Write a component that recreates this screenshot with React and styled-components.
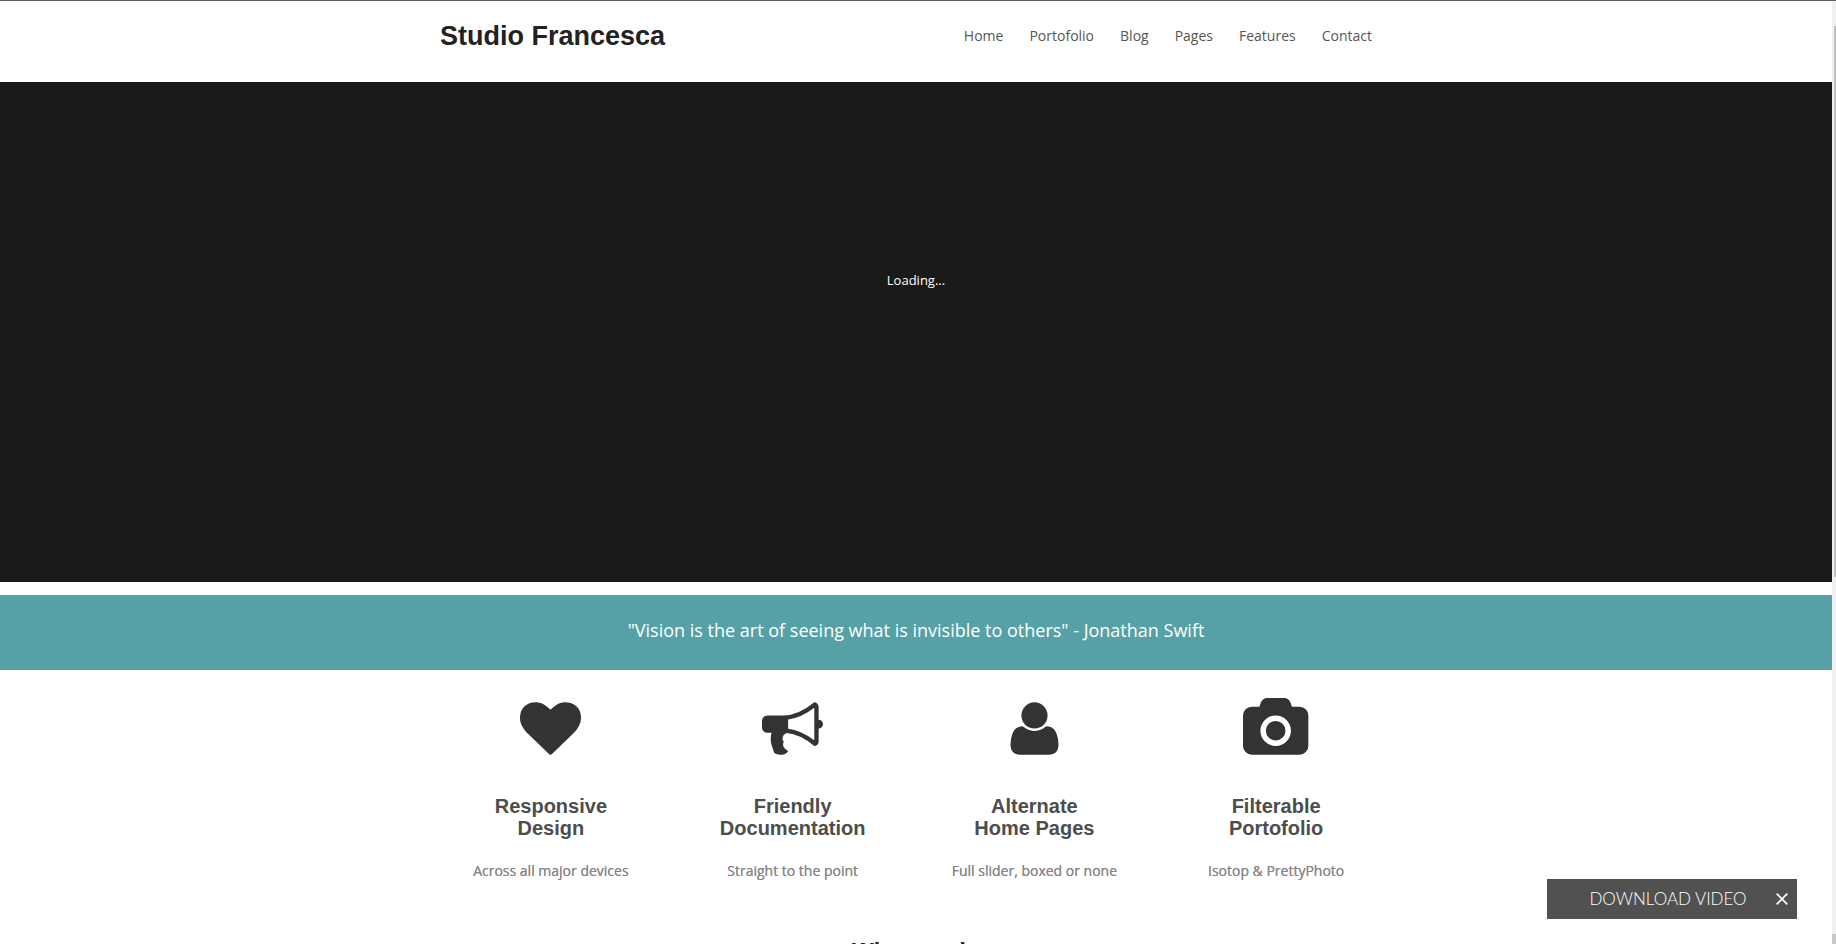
import React from "react";
import styled, { createGlobalStyle } from "styled-components";

const GlobalStyle = createGlobalStyle`
  * { box-sizing: border-box; }
  html, body { margin: 0; padding: 0; background: #fff; }
  body {
    height: 100vh;
    overflow: hidden;
    font-family: "Open Sans", "Noto Sans", sans-serif;
    font-size: 14px;
    line-height: 20px;
    color: #555;
  }
  h1, h2, h3, p { margin: 0; }
  a { color: inherit; text-decoration: none; }
`;

const Page = styled.div`
  margin-right: 4px;
`;

const Header = styled.header`
  border-top: 1px solid #5f5e66;
  margin-right: -4px;
  padding-right: 4px;
`;

const HeaderInner = styled.div`
  display: flex;
  justify-content: space-between;
  align-items: flex-start;
  max-width: 952px;
  height: 81px;
  margin: 0 auto;
  padding: 18px 20px 0 0;
`;

const Logo = styled.h1`
  font: bold 27px/34px "Liberation Sans", Arial, sans-serif;
  color: #222;
`;

const Nav = styled.nav`
  display: flex;
  gap: 26px;
  padding-top: 7px;
`;

const Slider = styled.section`
  display: flex;
  justify-content: center;
  height: 500px;
  padding-top: 188px;
  background: #1a1a1a;
  color: #fff;
  font-size: 13px;
`;

const Quote = styled.section`
  margin-top: 13px;
  padding: 20px 0 25px;
  background: #55a1a6;
  color: #fff;
  font-size: 18px;
  line-height: 30px;
  text-align: center;
`;

const Features = styled.section`
  display: grid;
  grid-template-columns: repeat(4, 1fr);
  max-width: 972px;
  margin: 0 auto;
  padding: 28px 5px 0 0;
`;

const Feature = styled.article`
  display: flex;
  flex-direction: column;
  align-items: center;
  text-align: center;
`;

const Icon = styled.svg`
  height: 61px;
  fill: #333;
`;

const FeatureTitle = styled.h3`
  margin-top: 36px;
  font: bold 20px/22px "Liberation Sans", Arial, sans-serif;
  color: #4d4d4d;
  white-space: pre-line;
`;

const FeatureText = styled.p`
  margin-top: 22px;
  color: #888;
  text-shadow: 0 0 0 #888;
`;

const SectionTitle = styled.h2`
  margin-top: 56px;
  font: bold 23px/30px "Liberation Sans", Arial, sans-serif;
  color: #222;
  text-align: center;
`;

const Download = styled.aside`
  position: fixed;
  right: 39px;
  bottom: 25px;
  display: flex;
  align-items: center;
  width: 250px;
  height: 40px;
  background: #515151;
  color: #fff;
`;

const DownloadLink = styled.a`
  flex: 1;
  padding-left: 22px;
  font: 300 17px/24px Lato, sans-serif;
  text-align: center;
`;

const CloseButton = styled.button`
  display: flex;
  align-items: center;
  justify-content: center;
  width: 30px;
  height: 40px;
  padding: 0;
  border: 0;
  background: none;
  color: inherit;
  cursor: pointer;
`;

const ScrollTrack = styled.div`
  position: fixed;
  top: 1px;
  right: 0;
  bottom: 0;
  display: flex;
  flex-direction: column;
  align-items: flex-end;
  justify-content: space-between;
  width: 4px;
  padding-top: 25px;
  background: #f0f0f0;
`;

const ScrollThumb = styled.div`
  width: 2px;
  height: 551px;
  background: #c1c1c1;
`;

const ScrollEnd = styled.div`
  width: 4px;
  height: 10px;
  background: #c8c8c8;
`;

const links = ["Home", "Portofolio", "Blog", "Pages", "Features", "Contact"];

const features = [
  {
    title: "Responsive\nDesign",
    text: "Across all major devices",
    box: "0 0 1792 1792",
    path: "M896 1664q-26 0-44-18l-624-602q-10-8-27.5-26t-55.5-65.5-68-97.5-53.5-121-23.5-138q0-220 127-344t351-124q62 0 126.5 21.5t120 58 95.5 68.5 76 68q36-36 76-68t95.5-68.5 120-58 126.5-21.5q224 0 351 124t127 344q0 221-229 450l-623 600q-18 18-44 18z",
  },
  {
    title: "Friendly\nDocumentation",
    text: "Straight to the point",
    box: "0 0 1792 1792",
    path: "M1664 640q53 0 90.5 37.5t37.5 90.5-37.5 90.5-90.5 37.5v384q0 52-38 90t-90 38q-417-347-812-380-58 19-91 66t-31 100.5 40 92.5q-20 33-23 65.5t6 58 33.5 55 48 50 61.5 50.5q-29 58-111.5 83t-168.5 11.5-132-55.5q-7-23-29.5-87.5t-32-94.5-23-89-15-101 3.5-98.5 22-110.5h-122q-66 0-113-47t-47-113v-192q0-66 47-113t113-47h480q435 0 896-384 52 0 90 38t38 90v384zm-128 604v-954q-394 302-768 343v270q377 42 768 341z",
  },
  {
    title: "Alternate\nHome Pages",
    text: "Full slider, boxed or none",
    box: "0 0 1792 1792",
    path: "M1600 1405q0 120-73 189.5t-194 69.5h-874q-121 0-194-69.5t-73-189.5q0-53 3.5-103.5t14-109 26.5-108.5 43-97.5 62-81 85.5-53.5 111.5-20q9 0 42 21.5t74.5 48 108 48 133.5 21.5 133.5-21.5 108-48 74.5-48 42-21.5q61 0 111.5 20t85.5 53.5 62 81 43 97.5 26.5 108.5 14 109 3.5 103.5zm-320-893q0 159-112.5 271.5t-271.5 112.5-271.5-112.5-112.5-271.5 112.5-271.5 271.5-112.5 271.5 112.5 112.5 271.5z",
  },
  {
    title: "Filterable\nPortofolio",
    text: "Isotop & PrettyPhoto",
    box: "0 0 1920 1792",
    path: "M960 672q119 0 203.5 84.5t84.5 203.5-84.5 203.5-203.5 84.5-203.5-84.5-84.5-203.5 84.5-203.5 203.5-84.5zm704-416q106 0 181 75t75 181v896q0 106-75 181t-181 75h-1408q-106 0-181-75t-75-181v-896q0-106 75-181t181-75h224l51-136q19-49 69.5-84.5t103.5-35.5h512q53 0 103.5 35.5t69.5 84.5l51 136h224zm-704 1152q185 0 316.5-131.5t131.5-316.5-131.5-316.5-316.5-131.5-316.5 131.5-131.5 316.5 131.5 316.5 316.5 131.5z",
  },
];

export default function App() {
  return (
    <>
      <GlobalStyle />
      <Page>
        <Header>
          <HeaderInner>
            <Logo>Studio Francesca</Logo>
            <Nav>
              {links.map((label) => (
                <a key={label} href={`#${label.toLowerCase()}`}>{label}</a>
              ))}
            </Nav>
          </HeaderInner>
        </Header>
        <main>
          <Slider>Loading...</Slider>
          <Quote>
            <p>"Vision is the art of seeing what is invisible to others" - Jonathan Swift</p>
          </Quote>
          <Features>
            {features.map((f) => (
              <Feature key={f.title}>
                <Icon viewBox={f.box} aria-hidden="true">
                  <path d={f.path} />
                </Icon>
                <FeatureTitle>{f.title}</FeatureTitle>
                <FeatureText>{f.text}</FeatureText>
              </Feature>
            ))}
          </Features>
          <SectionTitle>What we do</SectionTitle>
        </main>
      </Page>
      <Download>
        <DownloadLink href="#download">DOWNLOAD VIDEO</DownloadLink>
        <CloseButton type="button" aria-label="Close">
          <svg width="12" height="12" viewBox="0 0 12 12" stroke="currentColor" strokeWidth="1.7" aria-hidden="true">
            <path d="M.7.7l10.6 10.6M11.3.7L.7 11.3" />
          </svg>
        </CloseButton>
      </Download>
      <ScrollTrack aria-hidden="true">
        <ScrollThumb />
        <ScrollEnd />
      </ScrollTrack>
    </>
  );
}
